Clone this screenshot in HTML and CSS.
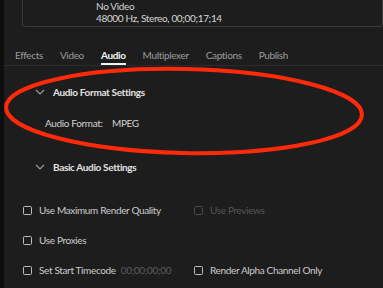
FILE: index.html
```html
<!DOCTYPE html>
<html>
<head>
<meta charset="utf-8">
<link rel="stylesheet" href="styles.css">
</head>
<body>
<div class="app">
  <div class="edge"></div>
  <div class="main">
    <div class="summary">
      <div class="line">Output: Sequence_01.mpg</div>
      <div class="line">No Video</div>
      <div class="line">48000 Hz, Stereo, 00;00;17;14</div>
    </div>
    <div class="tabs">
      <span class="tab">Effects</span>
      <span class="tab">Video</span>
      <span class="tab active">Audio</span>
      <span class="tab">Multiplexer</span>
      <span class="tab">Captions</span>
      <span class="tab">Publish</span>
    </div>
    <div class="section-head first">
      <svg class="chev" width="10" height="6" viewBox="0 0 10 6"><path d="M1 1 L5 5 L9 1" fill="none" stroke="#9a9a9a" stroke-width="1.2"/></svg>
      <span>Audio Format Settings</span>
    </div>
    <div class="field">
      <span class="label">Audio Format:</span>
      <span class="value">MPEG</span>
    </div>
    <div class="section-head second">
      <svg class="chev" width="10" height="6" viewBox="0 0 10 6"><path d="M1 1 L5 5 L9 1" fill="none" stroke="#9a9a9a" stroke-width="1.2"/></svg>
      <span>Basic Audio Settings</span>
    </div>
    <div class="divider"></div>
    <div class="options">
      <label class="opt"><span class="box"></span>Use Maximum Render Quality</label>
      <label class="opt dim"><span class="box"></span>Use Previews</label>
      <label class="opt"><span class="box"></span>Use Proxies</label>
      <span></span>
      <label class="opt"><span class="box"></span>Set Start Timecode <span class="tc">00;00;00;00</span></label>
      <label class="opt"><span class="box"></span>Render Alpha Channel Only</label>
    </div>
  </div>
</div>
<svg class="mark" width="383" height="288" viewBox="0 0 383 288">
  <ellipse cx="184" cy="111" rx="178" ry="42" fill="none" stroke="#ff2a0a" stroke-width="4" transform="rotate(1.2 184 111)"/>
</svg>
</body>
</html>
```
FILE: styles.css
```css
html, body {
  margin: 0;
  padding: 0;
  background: #1d1d1d;
  width: 383px;
  height: 288px;
  overflow: hidden;
  font-family: "Lato", "Open Sans", sans-serif;
  font-size: 10px;
  letter-spacing: -0.35px;
  color: #cfcfcf;
}
.app {
  display: flex;
  height: 288px;
  position: relative;
}
.edge {
  width: 4px;
  background: #0e0e0e;
  flex: none;
}
.main {
  flex: 1;
  display: flex;
  flex-direction: column;
}
.summary {
  margin: -16px 0 0 18px;
  border: 1px solid #3a3a3a;
  border-top: none;
  border-radius: 0 0 4px 4px;
  padding: 4px 0 2px 73px;
  height: 37px;
  box-sizing: content-box;
}
.line {
  line-height: 12px;
  height: 12px;
  white-space: nowrap;
  color: #d6d6d6;
}
.tabs {
  margin-top: 20px;
  display: flex;
  gap: 17px;
  padding-left: 11px;
  border-bottom: 1px solid #2b2b2b;
  height: 18px;
}
.tab {
  color: #9c9c9c;
  line-height: 16px;
  height: 18px;
  box-sizing: border-box;
  white-space: nowrap;
}
.tab.active {
  color: #f2f2f2;
  font-weight: bold;
  border-bottom: 2px solid #f2f2f2;
}
.section-head {
  display: flex;
  align-items: center;
  height: 14px;
  font-weight: bold;
  color: #e2e2e2;
  white-space: nowrap;
}
.section-head.first {
  margin-top: 20px;
}
.section-head.second {
  margin-top: 31px;
}
.chev {
  margin: 0 8px 0 31px;
}
.field {
  margin-top: 18px;
  height: 14px;
  line-height: 14px;
  padding-left: 41px;
  display: flex;
  color: #d2d2d2;
  white-space: nowrap;
}
.label {
  width: 67px;
}
.divider {
  margin-top: 9px;
  height: 3px;
  background: #101010;
  margin-left: -4px;
}
.options {
  margin-top: 21px;
  display: grid;
  grid-template-columns: 171px 1fr;
  grid-auto-rows: 30px;
  padding-left: 19px;
}
.opt {
  display: flex;
  align-items: center;
  height: 14px;
  color: #cccccc;
  white-space: nowrap;
}
.opt.dim {
  color: #555555;
}
.box {
  width: 7px;
  height: 7px;
  border: 1.5px solid #bdbdbd;
  border-radius: 1.5px;
  margin-right: 7px;
  flex: none;
}
.opt.dim .box {
  border-color: #4a4a4a;
}
.tc {
  color: #5c5c5c;
  margin-left: 5px;
}
.mark {
  position: absolute;
  left: 0;
  top: 0;
  pointer-events: none;
}
```
